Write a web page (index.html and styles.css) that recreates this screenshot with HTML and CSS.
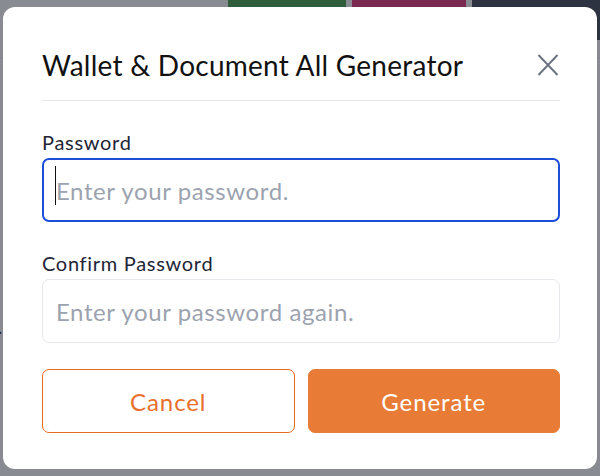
FILE: index.html
```html
<!DOCTYPE html>
<html lang="en">
<head>
<meta charset="utf-8">
<title>Wallet &amp; Document All Generator</title>
<link rel="stylesheet" href="styles.css">
</head>
<body>
<div class="page">
  <div class="topbar">
    <div class="tb-space"></div>
    <div class="tb-block tb-green"></div>
    <div class="tb-block tb-magenta"></div>
    <div class="tb-block tb-dark"></div>
  </div>
  <div class="page-line line-a"></div>
  <div class="page-letter">r</div>
</div>

<div class="modal" role="dialog">
  <div class="modal-header">
    <h2 class="modal-title">Wallet &amp; Document All Generator</h2>
    <button class="close-btn" aria-label="Close">
      <svg width="22" height="22" viewBox="0 0 22 22"><path d="M1.5 1 L20.5 21 M20.5 1 L1.5 21" stroke="#6b7280" stroke-width="1.9" fill="none"/></svg>
    </button>
  </div>
  <div class="field">
    <label class="field-label">Password</label>
    <div class="input-wrap">
      <input class="text-input focused" type="password" placeholder="Enter your password.">
      <span class="caret"></span>
    </div>
  </div>
  <div class="field">
    <label class="field-label">Confirm Password</label>
    <div class="input-wrap">
      <input class="text-input" type="password" placeholder="Enter your password again.">
    </div>
  </div>
  <div class="actions">
    <button class="btn btn-outline">Cancel</button>
    <button class="btn btn-primary">Generate</button>
  </div>
</div>
</body>
</html>
```
FILE: styles.css
```css
* { box-sizing: border-box; }
html, body { margin: 0; padding: 0; }
body {
  width: 600px;
  height: 476px;
  overflow: hidden;
  background: #888b91;
  font-family: "Lato", "Liberation Sans", sans-serif;
  position: relative;
}
.page { height: 476px; position: relative; }
.topbar { display: flex; align-items: flex-start; gap: 6px; }
.tb-space { width: 222px; }
.tb-block { height: 7px; }
.tb-green { width: 118px; background: #2f5e3d; }
.tb-magenta { width: 114px; background: #7a2a50; }
.tb-dark { flex: 1; height: 40px; background: #2d3340; }
.page-line { height: 1px; background: #7f8288; }
.line-a { margin-top: 17px; }
.page-letter {
  position: absolute;
  left: -6px;
  top: 322px;
  font-size: 20px;
  color: #111;
}

.modal {
  position: absolute;
  left: 3px;
  top: 7px;
  width: 594px;
  height: 462px;
  background: #fff;
  border-radius: 12px;
  padding: 40px 37px 0 39px;
  display: flex;
  flex-direction: column;
}
.modal-header {
  display: flex;
  align-items: center;
  justify-content: space-between;
  padding-bottom: 17px;
  border-bottom: 1px solid #e5e7eb;
}
.modal-title {
  margin: 0;
  font-size: 28px;
  line-height: 36px;
  font-weight: 400;
  letter-spacing: 0.25px;
  color: #111;
}
.close-btn {
  border: 0;
  background: none;
  padding: 0;
  margin-right: 1px;
  display: flex;
  width: 22px;
  height: 22px;
}
.field { display: flex; flex-direction: column; gap: 5px; margin-top: 30px; }
.field-label {
  font-size: 20px;
  line-height: 22px;
  letter-spacing: 0.7px;
  color: #1e2536;
}
.input-wrap { position: relative; }
.text-input {
  width: 100%;
  height: 64px;
  border: 1px solid #e5e7eb;
  border-radius: 7px;
  padding: 0 13px;
  font-family: "Lato", "Liberation Sans", sans-serif;
  font-size: 24px;
  letter-spacing: 0.6px;
  color: #111;
  background: #fff;
  outline: none;
}
.text-input.focused { border: 2px solid #1d4ed8; padding: 0 12px; }
.text-input::placeholder { color: #9ca3af; }
.caret {
  position: absolute;
  left: 13px;
  top: 8px;
  width: 1px;
  height: 39px;
  background: #111;
}
.actions {
  display: grid;
  grid-template-columns: 1fr 1fr;
  gap: 13px;
  margin-top: 26px;
}
.btn {
  height: 64px;
  border-radius: 7px;
  font-family: "Lato", "Liberation Sans", sans-serif;
  font-size: 24px;
  letter-spacing: 0.9px;
}
.btn-outline {
  background: #fff;
  border: 1px solid #ea6a1f;
  color: #e8702c;
}
.btn-primary {
  background: #e87b35;
  border: 1px solid #e87b35;
  color: #fff;
}
```
